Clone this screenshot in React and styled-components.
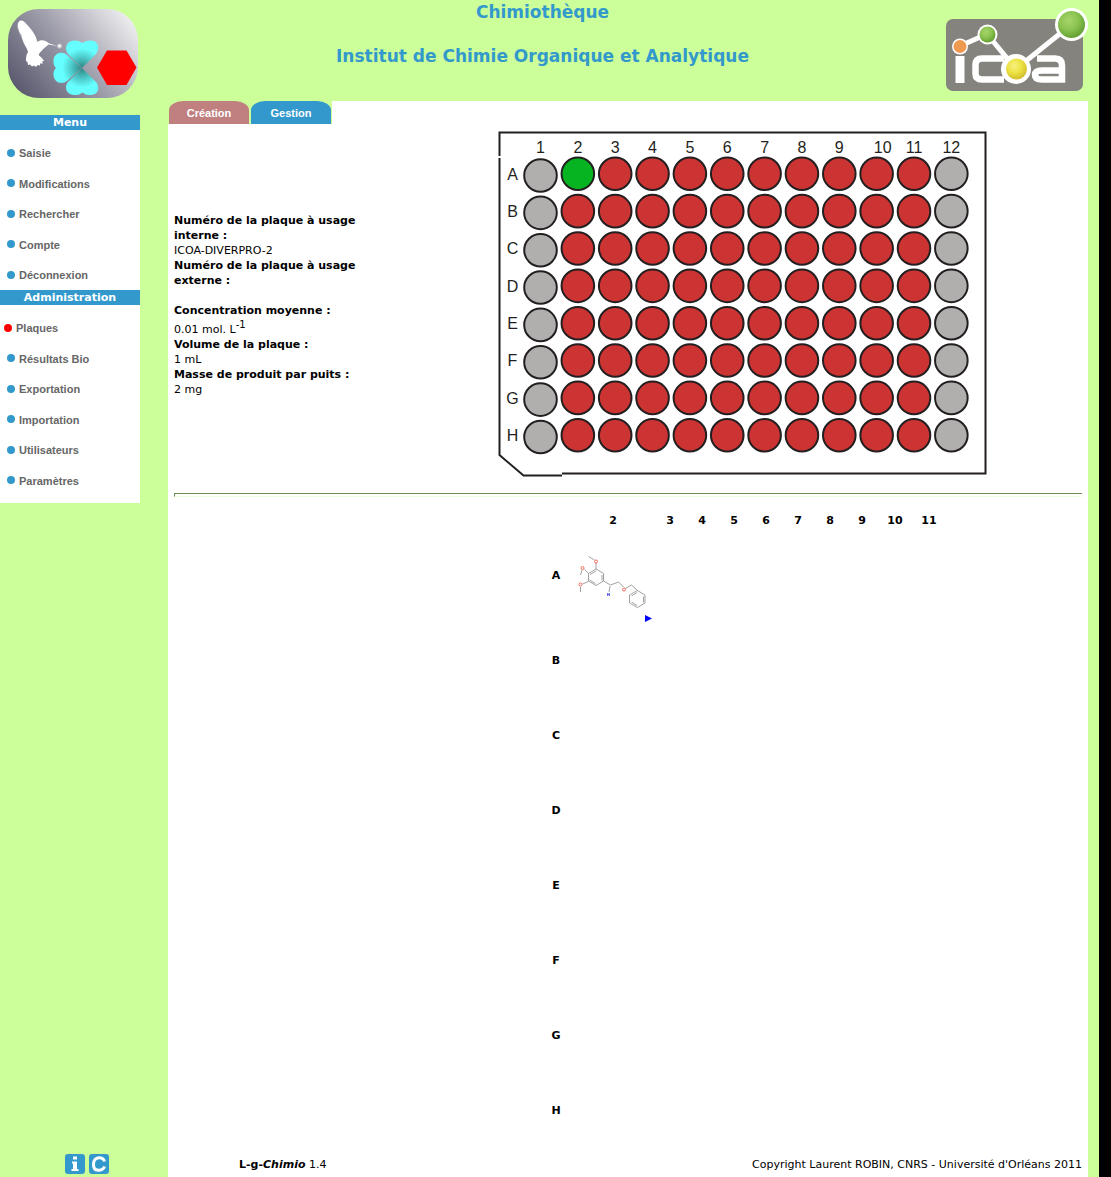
import React from 'react';
import styled, { createGlobalStyle } from 'styled-components';

const sans = '"DejaVu Sans", Verdana, sans-serif';
const arial = '"Liberation Sans", Arial, sans-serif';
const green = '#ccff99';
const blue = '#3399cc';

const Global = createGlobalStyle`
  *, *::before, *::after { box-sizing: border-box; }
  body { margin: 0; background: ${green}; font: 11px/15px ${sans}; color: #000; }
  ul, h1, h2, dl, dd { margin: 0; padding: 0; }
  svg { display: block; }
  a { text-decoration: none; }
`;

const Page = styled.div`
  min-height: 100vh;
  display: flex;
  flex-direction: column;
  border-right: 12px solid #000;
`;

const Header = styled.header`
  display: grid;
  grid-template-columns: 140px 1fr 154px;
  height: 101px;
`;

const LogoBox = styled.div`
  padding-top: 8px;
  padding-left: ${(p) => p.$left}px;
`;

const Titles = styled.div`
  display: flex;
  flex-direction: column;
  gap: 22px;
  padding-top: 1px;
  text-align: center;
  color: ${blue};
`;

const Title = styled.h1`
  font-size: 17px;
  line-height: 22px;
`;

const Body = styled.div`
  flex: 1;
  display: grid;
  grid-template-columns: 168px 1fr;
  padding-right: 11px;
`;

const Sidebar = styled.div`
  display: flex;
  flex-direction: column;
  padding-top: 14px;
`;

const Nav = styled.nav`
  width: 140px;
  background: #fff;
`;

const NavTitle = styled.h2`
  padding-top: 1px;
  background: ${blue};
  color: #fff;
  font-size: 11px;
  line-height: 14px;
  text-align: center;
`;

const NavList = styled.ul`
  list-style: none;
  display: flex;
  flex-direction: column;
  justify-content: space-between;
  min-height: ${(p) => p.$height}px;
  padding: 16px 0 ${(p) => p.$bottom}px;
`;

const NavLink = styled.a`
  display: flex;
  align-items: center;
  gap: 4px;
  padding-left: ${(p) => (p.$active ? 4 : 7)}px;
  font: bold 11px/15px ${arial};
  color: #666;

  &::before {
    content: '';
    width: 8px;
    height: 8px;
    margin-bottom: 2px;
    border-radius: 50%;
    background: ${(p) => (p.$active ? '#f00' : blue)};
  }
`;

const Badges = styled.div`
  display: flex;
  gap: 4px;
  margin-top: auto;
  padding: 0 0 3px 65px;
`;

const Main = styled.main`
  display: flex;
  flex-direction: column;
  background: #fff;
`;

const Tabs = styled.div`
  display: flex;
  gap: 2px;
  width: 164px;
  padding: 0 1px;
  background: ${green};
`;

const Tab = styled.button`
  flex: 1;
  height: 23px;
  padding: 2px 0 0;
  border: 0;
  border-radius: 14px 14px 0 0 / 9px 9px 0 0;
  background: ${(p) => (p.$active ? blue : '#c08080')};
  color: #fff;
  font: bold 11px/15px ${arial};
`;

const Content = styled.div`
  padding: 7px 6px 0;
`;

const Split = styled.section`
  display: grid;
  grid-template-columns: 230px 1fr;
  align-items: center;
  justify-items: start;
`;

const Centered = styled.div`
  grid-column: 2;
  justify-self: center;
`;

const Details = styled.dl`
  width: 210px;
  padding-top: 2px;
`;

const Term = styled.dt`
  font-weight: bold;
`;

const Value = styled.dd`
  min-height: 15px;

  sup { font-size: 10px; line-height: 13px; }
`;

const Rule = styled.hr`
  height: 4px;
  margin: 16px 0;
  border: 1px solid;
  border-color: #6f8a55 #efffe0 #efffe0 #6f8a55;
  border-right: 0;
`;

const Compounds = styled.table`
  border-collapse: collapse;
  table-layout: fixed;
  width: 406px;

  th, td { padding: 0; }
`;

const Col = styled.col`
  width: ${(p) => p.$w}px;
`;

const Row = styled.tr`
  height: ${(p) => p.$h}px;
`;

const Compound = styled.div`
  display: flex;
  flex-direction: column;
  padding: 12px 2px 0;
`;

const Next = styled.a`
  align-self: flex-end;
`;

const Footer = styled.footer`
  display: flex;
  justify-content: space-between;
  margin-top: auto;
  padding: 8px 6px 5px 71px;
`;

const Bird = () => (
  <svg width="131" height="90" viewBox="8 8 131 90" role="img" aria-label="Chimiothèque">
    <defs>
      <linearGradient id="panel" x1="0" y1="0.75" x2="1" y2="0.2">
        <stop offset="0" stopColor="#5c5b70" />
        <stop offset="0.5" stopColor="#a09fac" />
        <stop offset="1" stopColor="#eeeef0" />
      </linearGradient>
      <radialGradient id="leaf" gradientUnits="userSpaceOnUse" cx="82" cy="68" r="28">
        <stop offset="0" stopColor="#2f8585" />
        <stop offset="0.7" stopColor="#66ffff" />
      </radialGradient>
    </defs>
    <rect x="8" y="9" width="130" height="89" rx="31" fill="url(#panel)" />
    <path d="M18 22l-1 5 3 8 4 8 2-2-5-11z" fill="#fff" opacity="0.35" />
    <path
      d="M19.500 21c2-1 4 0 5.500 1.500 5 5 9 10 11 15l1.500 4.500c2-2 5-2.500 8-1l4 2.500 8 2.500-9-1.500c-3 2.500-5 4-7 6.500-2 2-3 3-2.500 4.500 2 1.500 4 3.500 5 5.500l-2 .500 1 2-3 0 0 2-2.500-.500-1.500 2-2-1.500-2 1-2-2-2 .500-.500-3-1.500-1c0-3 0-6 2-9l-1-3-2-3.500c-2-4-3-7-3.500-10.500l-2-3c-1-3-2-6-1.500-9z"
      fill="#fff"
    />
    <circle cx="59.500" cy="46" r="2.500" fill="#fff" opacity="0.45" />
    <circle cx="59.500" cy="46" r="1.200" fill="#fff" />
    <g fill="url(#leaf)">
      <path d="M82 68L68 54C64 49 66 41 74 40.500Q79 40 82.500 43Q86 40 91 40.500C99 41 100 49 96 54Z" />
      <path d="M82 68L68 82C64 87 66 94.500 74 95Q79 95.500 82.500 92.500Q86 95.500 91 95C99 94.500 100 87 96 82Z" />
      <path d="M81.500 68L67 55C62 50.500 54 53 53.500 60Q53 65 56 68Q53 71 53.500 75C54 83 62 85 67 81Z" />
    </g>
    <path d="M107 50.500h19.500l10 17-10 17.500h-19.500l-10-17.500z" fill="#f00" />
  </svg>
);

const Icoa = () => (
  <svg width="143" height="85" viewBox="945 8 143 85" role="img" aria-label="ICOA">
    <defs>
      <radialGradient id="gBall" cx="0.4" cy="0.35" r="0.7">
        <stop offset="0" stopColor="#a6d46c" />
        <stop offset="0.5" stopColor="#8bc450" />
        <stop offset="1" stopColor="#5d9a30" />
      </radialGradient>
      <radialGradient id="yBall" cx="0.4" cy="0.35" r="0.7">
        <stop offset="0" stopColor="#f8f080" />
        <stop offset="0.5" stopColor="#ebe242" />
        <stop offset="1" stopColor="#d2b82c" />
      </radialGradient>
    </defs>
    <rect x="946" y="19" width="137" height="72" rx="7" fill="#85837e" />
    <g fill="none" stroke="#fff">
      <path d="M960 46l27-12 29 35 56-45" strokeWidth="5" />
      <path d="M960 56v27" strokeWidth="9" />
      <path d="M1004 58.500h-22q-6.500 0-6.500 6.500v8.500q0 6 6.500 6h22" strokeWidth="6.500" />
      <path d="M1037 58.500h18q7 0 7 7v14h-20q-7 0-7-4.500t7-4.500h20" strokeWidth="6.500" />
    </g>
    <g fill="#fff">
      <circle cx="960" cy="46.500" r="8" />
      <circle cx="987.500" cy="34.500" r="10" />
      <circle cx="1016" cy="69" r="15" />
      <circle cx="1071.500" cy="24.500" r="16.500" />
    </g>
    <circle cx="960" cy="46.500" r="6.500" fill="#ee9a4f" />
    <circle cx="987.500" cy="34.500" r="8" fill="url(#gBall)" />
    <circle cx="1016.500" cy="69" r="10.500" fill="url(#yBall)" />
    <circle cx="1071.500" cy="24.500" r="13.500" fill="url(#gBall)" />
  </svg>
);

const Badge = ({ children, label }) => (
  <a href="#" aria-label={label}>
    <svg width="20" height="20" viewBox="0 0 20 20">
      <rect width="20" height="20" rx="3" fill={blue} />
      {children}
    </svg>
  </a>
);

const letters = ['A', 'B', 'C', 'D', 'E', 'F', 'G', 'H'];
const numbers = [1, 2, 3, 4, 5, 6, 7, 8, 9, 10, 11, 12];
const PITCH = 37.35;

const wellFill = (row, n) => {
  if (n === 1 || n === 12) return '#b0afae';
  return row === 0 && n === 2 ? '#06b421' : '#cc3333';
};

const Plate = () => (
  <svg width="490" height="346" viewBox="498 131 490 346" role="img" aria-label="Plaque">
    <path
      d="M562 473.500H985.500V132.500H499.500V156M499.500 158V455l24 20.500H562"
      fill="none"
      stroke="#231f20"
      strokeWidth="2"
    />
    <g fontFamily='"Liberation Sans", Arial, sans-serif' fontSize="16" fill="#231f20" textAnchor="middle">
      {numbers.map((n, i) => (
        <text key={n} x={540.5 + i * PITCH + (n === 10 ? 6 : 0)} y="153">{n}</text>
      ))}
      {letters.map((l, i) => (
        <text key={l} x="512.500" y={179.500 + i * PITCH}>{l}</text>
      ))}
    </g>
    <g stroke="#231f20" strokeWidth="2">
      {letters.map((l, r) =>
        numbers.map((n, c) => (
          <circle
            key={l + n}
            cx={540.5 + c * PITCH}
            cy={(n === 1 ? 175.5 : 173.8) + r * PITCH}
            r="16.300"
            fill={wellFill(r, n)}
          />
        ))
      )}
    </g>
  </svg>
);

const Molecule = () => (
  <svg width="76" height="75" viewBox="574 540 76 75" role="img" aria-label="Produit A2">
    <g fill="none" stroke="#8a8a8a" strokeWidth="0.8">
      <path d="M596 569l7.500 4.500v7.500l-7.500 4.500-7.500-4.500v-7.500zM590 574.500l6-3.500M602 575v5.500M595.500 583.500l-6-3.500" />
      <path d="M596 569v-6M594.500 560l-6-3.500M588.500 573.500l-4-4M582 570l-1.500 5M588.500 581.500l-6 2.500M580.500 587v5" />
      <path d="M603.500 581l7 4 8-3 5 5M610 586l-1 6M625.500 588.500l6-3.500 6 5.500" />
      <path d="M637.500 590.500l7.500 4.500v8l-7.500 4.500-8-4.500v-8zM637 592.500l-5.500 3.500M643.500 596.500v6M637 605.500l-5.500-3.500" />
    </g>
    <g fill="none" stroke="#f26a5a" strokeWidth="1">
      <circle cx="596" cy="561.500" r="1.500" />
      <circle cx="582.500" cy="568" r="1.500" />
      <circle cx="580.500" cy="584.500" r="1.500" />
      <circle cx="624" cy="589.500" r="1.500" />
    </g>
    <path d="M607.500 596v-3l2 3v-3" fill="none" stroke="#6a6af0" />
  </svg>
);

const NavItems = ({ items, active, height, bottom }) => (
  <NavList $height={height} $bottom={bottom}>
    {items.map((item) => (
      <li key={item}>
        <NavLink href="#" $active={item === active}>{item}</NavLink>
      </li>
    ))}
  </NavList>
);

const columnWidths = [32, 82, 32, 32, 32, 32, 32, 32, 32, 34, 34];

export default function App() {
  return (
    <Page>
      <Global />
      <Header>
        <LogoBox $left={8}><Bird /></LogoBox>
        <Titles>
          <Title>Chimiothèque</Title>
          <Title as="h2">Institut de Chimie Organique et Analytique</Title>
        </Titles>
        <LogoBox $left={0}><Icoa /></LogoBox>
      </Header>
      <Body>
        <Sidebar>
          <Nav>
            <NavTitle>Menu</NavTitle>
            <NavItems
              items={['Saisie', 'Modifications', 'Rechercher', 'Compte', 'Déconnexion']}
              height={160}
              bottom={7}
            />
            <NavTitle>Administration</NavTitle>
            <NavItems
              items={['Plaques', 'Résultats Bio', 'Exportation', 'Importation', 'Utilisateurs', 'Paramètres']}
              active="Plaques"
              height={198}
              bottom={14}
            />
          </Nav>
          <Badges>
            <Badge label="Informations">
              <path d="M8 2.500h4v3H8zM7 7.500h5v7.500h1.500v2h-7v-2H8v-5.500H7z" fill="#fff" />
            </Badge>
            <Badge label="Crédits">
              <path d="M15.500 7.500C14.500 2.500 5 1.500 4.500 10S14 17.500 15.500 12.500" fill="none" stroke="#fff" strokeWidth="3" />
            </Badge>
          </Badges>
        </Sidebar>
        <Main>
          <Tabs>
            <Tab type="button">Création</Tab>
            <Tab type="button" $active>Gestion</Tab>
          </Tabs>
          <Content>
            <Split>
              <Details>
                <Term>Numéro de la plaque à usage interne :</Term>
                <Value>ICOA-DIVERPRO-2</Value>
                <Term>Numéro de la plaque à usage externe :</Term>
                <Value />
                <Term>Concentration moyenne :</Term>
                <Value>0.01 mol. L<sup>-1</sup></Value>
                <Term>Volume de la plaque :</Term>
                <Value>1 mL</Value>
                <Term>Masse de produit par puits :</Term>
                <Value>2 mg</Value>
              </Details>
              <Centered><Plate /></Centered>
            </Split>
            <Rule />
            <Split>
              <Centered>
                <Compounds>
                  <colgroup>
                    {columnWidths.map((w, i) => <Col key={i} $w={w} />)}
                  </colgroup>
                  <thead>
                    <tr>
                      <td />
                      {numbers.slice(1, 11).map((n) => <th key={n} scope="col">{n}</th>)}
                    </tr>
                  </thead>
                  <tbody>
                    {letters.map((l, r) => (
                      <Row key={l} $h={r === 0 ? 95 : 75}>
                        <th scope="row">{l}</th>
                        <td>
                          {r === 0 && (
                            <Compound>
                              <Molecule />
                              <Next href="#" aria-label="Produit suivant">
                                <svg width="8" height="8" viewBox="0 0 8 8">
                                  <path d="M1 0L8 3.500 1 7z" fill="#00f" />
                                </svg>
                              </Next>
                            </Compound>
                          )}
                        </td>
                        <td colSpan="9" />
                      </Row>
                    ))}
                  </tbody>
                </Compounds>
              </Centered>
            </Split>
          </Content>
          <Footer>
            <span><b>L-g-<i>Chimio</i></b> 1.4</span>
            <span>Copyright Laurent ROBIN, CNRS - Université d'Orléans 2011</span>
          </Footer>
        </Main>
      </Body>
    </Page>
  );
}
